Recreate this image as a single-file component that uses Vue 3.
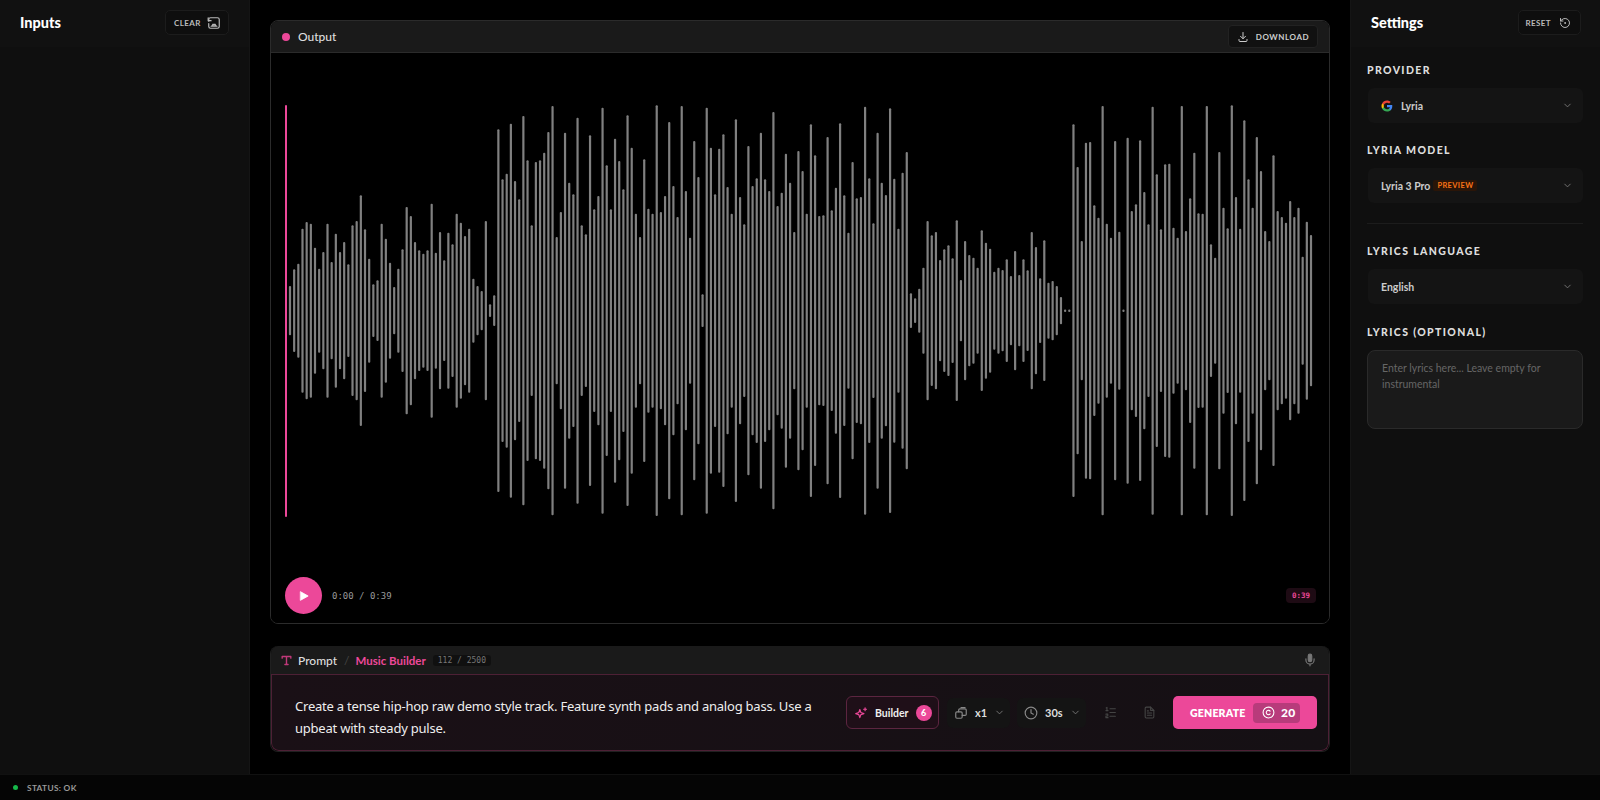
<script setup>
const tops = [585,535,518,413,393,398,470,533,483,398,513,428,483,453,520,403,390,313,415,503,580,568,398,443,515,588,533,475,348,375,453,478,488,478,338,485,423,508,425,460,368,395,435,413,563,585,600,390,640,613,115,265,248,98,270,325,75,208,403,213,208,185,123,45,438,363,125,275,310,80,403,430,133,355,315,50,223,355,143,210,295,73,
170,368,438,205,353,368,43,363,315,93,285,378,45,300,440,150,258,610,50,170,310,173,130,288,368,85,318,400,165,285,262,125,265,300,63,345,305,188,275,423,180,240,368,100,193,375,373,138,358,290,97,313,425,213,322,318,47,262,397,125,275,312,52,263,413,245,183,607,622,593,530,390,433,423,507,475,463,502,388,567,450,492,500,530,
418,455,473,542,530,537,505,555,480,552,505,538,423,468,562,448,575,570,585,618,656,656,100,228,450,155,153,343,380,45,398,440,150,422,656,140,360,340,148,303,400,47,250,415,220,218,410,440,45,420,322,185,367,368,45,460,500,183,350,412,43,318,413,88,265,350,138,240,420,450,193,360,378,395,330,378,350,497,392,432]
const step = 1021 / (tops.length - 1)
const bars = tops.map((p, i) => {
  const h = Math.max(2.5, (2 * (659 - p)) / 3)
  return { id: i, x: 3.9 + i * step, y: 205.7 - h / 2, h }
})
</script>

<template>
  <div class="app">
    <div class="main">
      <aside class="side left">
        <header class="side-head">
          <h2>Inputs</h2>
          <button class="ghost">
            <span>CLEAR</span>
            <svg class="ic14" viewBox="0 0 24 24"><path d="M3 9V6a3 3 0 0 1 3-3h12a3 3 0 0 1 3 3v12a3 3 0 0 1-3 3H6a3 3 0 0 1-3-3v-5"/><path d="M2 3v5h5"/><path d="M7 17.500h10M8.500 17l2-3 1.500 2 1.500-2 2 3"/></svg>
          </button>
        </header>
      </aside>

      <main class="center">
        <section class="card output">
          <div class="card-head">
            <span class="dot"></span>
            <span class="title">Output</span>
            <button class="download">
              <svg class="ic12" viewBox="0 0 24 24"><path d="M12 3v12"/><path d="M7 10.500l5 5 5-5"/><path d="M4 17v2a2 2 0 0 0 2 2h12a2 2 0 0 0 2-2v-2"/></svg>
              <span>DOWNLOAD</span>
            </button>
          </div>
          <div class="out-body">
            <svg class="wave" viewBox="0 0 1034 412">
              <rect x="0" y="0" width="2" height="412" rx="1" class="playhead" />
              <rect v-for="b in bars" :key="b.id" class="bar" :x="b.x" :y="b.y" width="2.2" :height="b.h" rx="1" />
            </svg>
            <div class="transport">
              <button class="play"><svg width="10" height="10" viewBox="0 0 24 24"><path d="M4 2l18 10L4 22z" fill="#fff" stroke="#fff"/></svg></button>
              <span class="time">0:00 / 0:39</span>
              <span class="dur">0:39</span>
            </div>
          </div>
        </section>

        <section class="card prompt">
          <div class="card-head thin">
            <svg class="t-ic" viewBox="0 0 14 14"><path d="M1.500 4V2h11v2M7 2v10M5 12h4"/></svg>
            <span class="title">Prompt</span>
            <span class="slash">/</span>
            <span class="builder-title">Music Builder</span>
            <span class="count">112 / 2500</span>
            <svg class="mic" viewBox="0 0 24 24"><rect x="9" y="2" width="6" height="13" rx="3" fill="#777"/><path d="M5 10v2a7 7 0 0 0 14 0v-2M12 19v3"/></svg>
          </div>
          <div class="prompt-body">
            <p class="prompt-text">Create a tense hip-hop raw demo style track. Feature synth pads and analog bass. Use a upbeat with steady pulse.</p>
            <div class="tools">
              <button class="builder">
                <svg class="ic14 pink" viewBox="0 0 24 24"><path d="M10 6l1.800 5.200L17 13l-5.200 1.800L10 20l-1.800-5.200L3 13l5.200-1.800z"/><path d="M19 3v5M16.500 5.500h5"/></svg>
                <span>Builder</span>
                <b class="badge">6</b>
              </button>
              <button class="tool x1">
                <svg class="ic14" viewBox="0 0 24 24"><rect x="3" y="10" width="11" height="11" rx="2"/><path d="M8 10V7a2 2 0 0 1 2-2h9a2 2 0 0 1 2 2v7a2 2 0 0 1-2 2h-5"/><path d="M12 2.500h7"/></svg>
                <span>x1</span>
                <svg class="chev" viewBox="0 0 24 24"><path d="M6 9l6 6 6-6"/></svg>
              </button>
              <button class="tool sec">
                <svg class="ic14" viewBox="0 0 24 24"><circle cx="12" cy="12" r="10"/><path d="M12 6v6l4 2"/></svg>
                <span>30s</span>
                <svg class="chev" viewBox="0 0 24 24"><path d="M6 9l6 6 6-6"/></svg>
              </button>
              <button class="dim">
                <svg class="ic13" viewBox="0 0 24 24"><path d="M11 5h10M11 12h10M11 19h10M4 3.500l1.500-1v6M3.500 8.500h4M3.500 15h3.500v3.500h-3.500v3h4"/></svg>
              </button>
              <button class="dim">
                <svg class="ic13" viewBox="0 0 24 24"><path d="M14 2H6a2 2 0 0 0-2 2v16a2 2 0 0 0 2 2h12a2 2 0 0 0 2-2V8z"/><path d="M14 2v6h6M8 13h8M8 17h8M8 9h2"/></svg>
              </button>
              <button class="generate">
                <span>GENERATE</span>
                <span class="cost">
                  <svg class="ic13 white" viewBox="0 0 24 24"><circle cx="12" cy="12" r="10"/><path d="M15 9.500a4 4 0 1 0 0 5"/></svg>
                  <b>20</b>
                </span>
              </button>
            </div>
          </div>
        </section>
      </main>

      <aside class="side right">
        <header class="side-head">
          <h2>Settings</h2>
          <button class="ghost">
            <span>RESET</span>
            <svg class="ic12" viewBox="0 0 24 24"><path d="M3 12a9 9 0 1 0 3-6.700L3 8"/><path d="M3 3v5h5"/><circle cx="12" cy="12" r="1"/></svg>
          </button>
        </header>
        <div class="form">
          <label class="lab">PROVIDER</label>
          <div class="select">
            <svg class="g" viewBox="0 0 24 24"><path fill="#4285F4" d="M22.560 12.250c0-.780-.070-1.530-.200-2.250H12v4.260h5.920c-.260 1.370-1.040 2.530-2.210 3.310v2.770h3.570c2.080-1.920 3.280-4.740 3.280-8.090z"/><path fill="#34A853" d="M12 23c2.970 0 5.460-.980 7.280-2.660l-3.570-2.770c-.980.660-2.230 1.060-3.710 1.060-2.860 0-5.290-1.930-6.160-4.530H2.180v2.840C3.990 20.530 7.700 23 12 23z"/><path fill="#FBBC05" d="M5.840 14.090c-.220-.660-.350-1.360-.350-2.090s.130-1.430.350-2.090V7.070H2.180C1.430 8.550 1 10.220 1 12s.430 3.450 1.180 4.930l3.660-2.840z"/><path fill="#EA4335" d="M12 5.380c1.620 0 3.060.560 4.210 1.640l3.150-3.150C17.450 2.090 14.970 1 12 1 7.700 1 3.990 3.470 2.180 7.070l3.660 2.840c.870-2.600 3.300-4.530 6.160-4.530z"/></svg>
            <span>Lyria</span>
            <svg class="chev" viewBox="0 0 24 24"><path d="M6 9l6 6 6-6"/></svg>
          </div>
          <label class="lab">LYRIA MODEL</label>
          <div class="select">
            <span>Lyria 3 Pro</span>
            <em class="preview">PREVIEW</em>
            <svg class="chev" viewBox="0 0 24 24"><path d="M6 9l6 6 6-6"/></svg>
          </div>
          <hr class="rule" />
          <label class="lab">LYRICS LANGUAGE</label>
          <div class="select last">
            <span>English</span>
            <svg class="chev" viewBox="0 0 24 24"><path d="M6 9l6 6 6-6"/></svg>
          </div>
          <label class="lab">LYRICS (OPTIONAL)</label>
          <div class="area">Enter lyrics here... Leave empty for instrumental</div>
        </div>
      </aside>
    </div>
    <footer class="status">
      <span class="ok"></span>
      <span>STATUS: OK</span>
    </footer>
  </div>
</template>

<style>
html, body { margin: 0; background: #000; overflow: hidden; }
</style>

<style scoped>
.app { width: 1600px; height: 800px; display: flex; flex-direction: column; font-family: "Lato", "Noto Sans", sans-serif; color: #e5e5e5; background: #000; }
.main { flex: 1; display: flex; min-height: 0; }
button { font-family: inherit; border: 0; background: none; color: inherit; padding: 0; display: flex; align-items: center; }
svg { fill: none; stroke: currentColor; stroke-width: 2; stroke-linecap: round; stroke-linejoin: round; flex: none; }
.ic12 { width: 12px; height: 12px; }
.ic13 { width: 13px; height: 13px; }
.ic14 { width: 14px; height: 14px; }
.side { width: 250px; background: #0f0f0f; flex: none; box-sizing: border-box; }
.left { border-right: 1px solid #151515; }
.right { border-left: 1px solid #151515; }
.side-head { height: 47px; display: flex; align-items: center; justify-content: space-between; background: #111; box-sizing: border-box; padding: 0 20px 2px 20px; }
.right .side-head { padding-left: 20px; padding-right: 19px; }
.side-head h2 { margin: 0; font-size: 14.500px; font-weight: 900; color: #fff; }
.ghost { height: 25px; box-sizing: border-box; border: 1px solid #1c1c1c; border-radius: 5px; background: #0e0e0e; padding: 0 9px; gap: 8px; color: #bbb; font-size: 8px; font-weight: 700; letter-spacing: .05em; }
.left .ghost { width: 64px; padding: 0 8px; gap: 6px; }
.right .ghost { width: 63px; justify-content: flex-end; }
.center { flex: 1; min-width: 0; display: flex; flex-direction: column; gap: 22px; padding: 20px 20px 22px; background: #000; }
.card { border-radius: 8px; overflow: hidden; display: flex; flex-direction: column; }
.output { flex: 1; border: 1px solid #2b2b2b; min-height: 0; }
.card-head { height: 31px; background: #1a1a1a; border-bottom: 1px solid #2b2b2b; display: flex; align-items: center; padding: 0 11px 0 11px; flex: none; }
.dot { width: 8px; height: 8px; border-radius: 50%; background: #ec4899; margin-right: 8px; }
.title { font-size: 12px; font-weight: 500; color: #ddd; }
.download { margin-left: auto; width: 90px; height: 23px; justify-content: center; gap: 7px; background: #111; border: 1px solid #222; box-sizing: border-box; border-radius: 4px; color: #ccc; font-size: 8px; font-weight: 700; letter-spacing: .07em; }
.out-body { flex: 1; background: #000; display: flex; flex-direction: column; padding: 52px 13px 0 14px; min-height: 0; }
.wave { display: block; width: 1034px; height: 412px; stroke: none; }
.bar { fill: #808080; }
.playhead { fill: #ec4899; }
.transport { display: flex; align-items: center; margin-top: 60px; }
.play { width: 37px; height: 37px; border-radius: 50%; background: #ec4899; justify-content: center; }
.time { margin-left: 10px; font: 9px "DejaVu Sans Mono", monospace; color: #999; }
.dur { margin-left: auto; padding: 3px 6px; border-radius: 4px; background: #1e0b14; color: #ec4899; font: 700 7.500px "DejaVu Sans Mono", monospace; }
.prompt { height: 105px; flex: none; border: 1px solid #202020; border-top: 0; }
.thin { height: 28px; padding: 0 12px 0 9px; border-bottom: 1px solid #4d2035; }
.t-ic { width: 11px; height: 11px; color: #c0397a; stroke-width: 1.800px; margin-right: 6px; margin-left: 1px; }
.slash { margin: 0 6px 0 7px; color: #444; font-size: 12px; }
.builder-title { color: #ec4899; font-size: 11.500px; font-weight: 700; }
.count { margin-left: 7px; padding: 1px 5px; background: #101010; border-radius: 3px; color: #777; font: 8px "DejaVu Sans Mono", monospace; }
.mic { width: 14px; height: 14px; margin-left: auto; color: #777; }
.prompt-body { flex: 1; display: flex; align-items: center; background: linear-gradient(90deg, #1a1016, #151014); border: 1px solid #4d2035; border-top: 0; border-radius: 0 0 8px 8px; padding: 0 11px 0 23px; }
.prompt-text { flex: none; width: 540px; margin: 0; padding-top: 8px; font: 13px/22px "Noto Sans", sans-serif; letter-spacing: -.22px; color: #eee; }
.tools { display: flex; align-items: center; gap: 9px; flex: none; margin-left: auto; }
.builder { width: 93px; height: 33px; box-sizing: border-box; border: 1px solid #5c2540; border-radius: 6px; background: #1f0f18; gap: 7px; padding-left: 7px; margin-right: -1px; font-size: 10.500px; font-weight: 700; color: #eee; }
.pink { color: #ec4899; }
.badge { width: 16px; height: 16px; border-radius: 50%; background: #ec4899; color: #fff; font-size: 9px; display: flex; align-items: center; justify-content: center; }
.tool { height: 30px; box-sizing: border-box; background: #141414; border-radius: 6px; padding: 0 7px; gap: 7px; font-size: 11px; font-weight: 700; color: #ddd; }
.x1 { width: 63px; margin-right: -2px; }
.sec { width: 69px; }
.tool .ic14 { color: #888; }
.chev { width: 11px; height: 11px; color: #777; }
.dim { width: 30px; height: 30px; justify-content: center; color: #444; }
.generate { width: 144px; height: 33px; background: #ec4899; border-radius: 5px; justify-content: space-between; padding: 0 17px 0 17px; box-sizing: border-box; font-size: 10.500px; font-weight: 800; letter-spacing: .02em; color: #fff; }
.cost { width: 47px; height: 20px; box-sizing: border-box; display: flex; align-items: center; gap: 6px; background: #b83b7b; border-radius: 4px; padding-left: 9px; font-size: 12px; }
.white { color: #fff; }
.form { display: flex; flex-direction: column; padding: 16px 17px 0 16px; }
.lab { font-size: 10.500px; font-weight: 900; letter-spacing: .13em; color: #ddd; line-height: 14px; margin-bottom: 11px; }
.select { height: 35px; background: #141414; border-radius: 6px; display: flex; align-items: center; padding: 0 10px 0 13px; gap: 6px; margin-left: 1px; font-size: 10.500px; font-weight: 700; color: #ccc; margin-bottom: 20px; }
.select.last { margin-bottom: 21px; }
.select .chev { margin-left: auto; }
.g { width: 12px; height: 12px; stroke: none; margin-right: 2px; }
.preview { margin-left: -3px; padding: 0 4px; background: #2a1508; border-radius: 2px; color: #f97316; font-size: 7.500px; font-weight: 700; font-style: normal; letter-spacing: .05em; line-height: 11px; }
.rule { width: 100%; border: 0; border-top: 1px solid #1c1c1c; margin: 0 0 20px; }
.area { height: 79px; box-sizing: border-box; background: #1a1a1a; border: 1px solid #2a2a2a; border-radius: 8px; padding: 10px 14px; font-size: 10.500px; line-height: 15.500px; color: #666; }
.status { height: 26px; flex: none; background: #050505; border-top: 1px solid #111; box-sizing: border-box; display: flex; align-items: center; padding-left: 13px; gap: 9px; font-size: 8.300px; font-weight: 700; letter-spacing: .04em; color: #999; }
.ok { width: 5px; height: 5px; border-radius: 50%; background: #16b84a; }
</style>
